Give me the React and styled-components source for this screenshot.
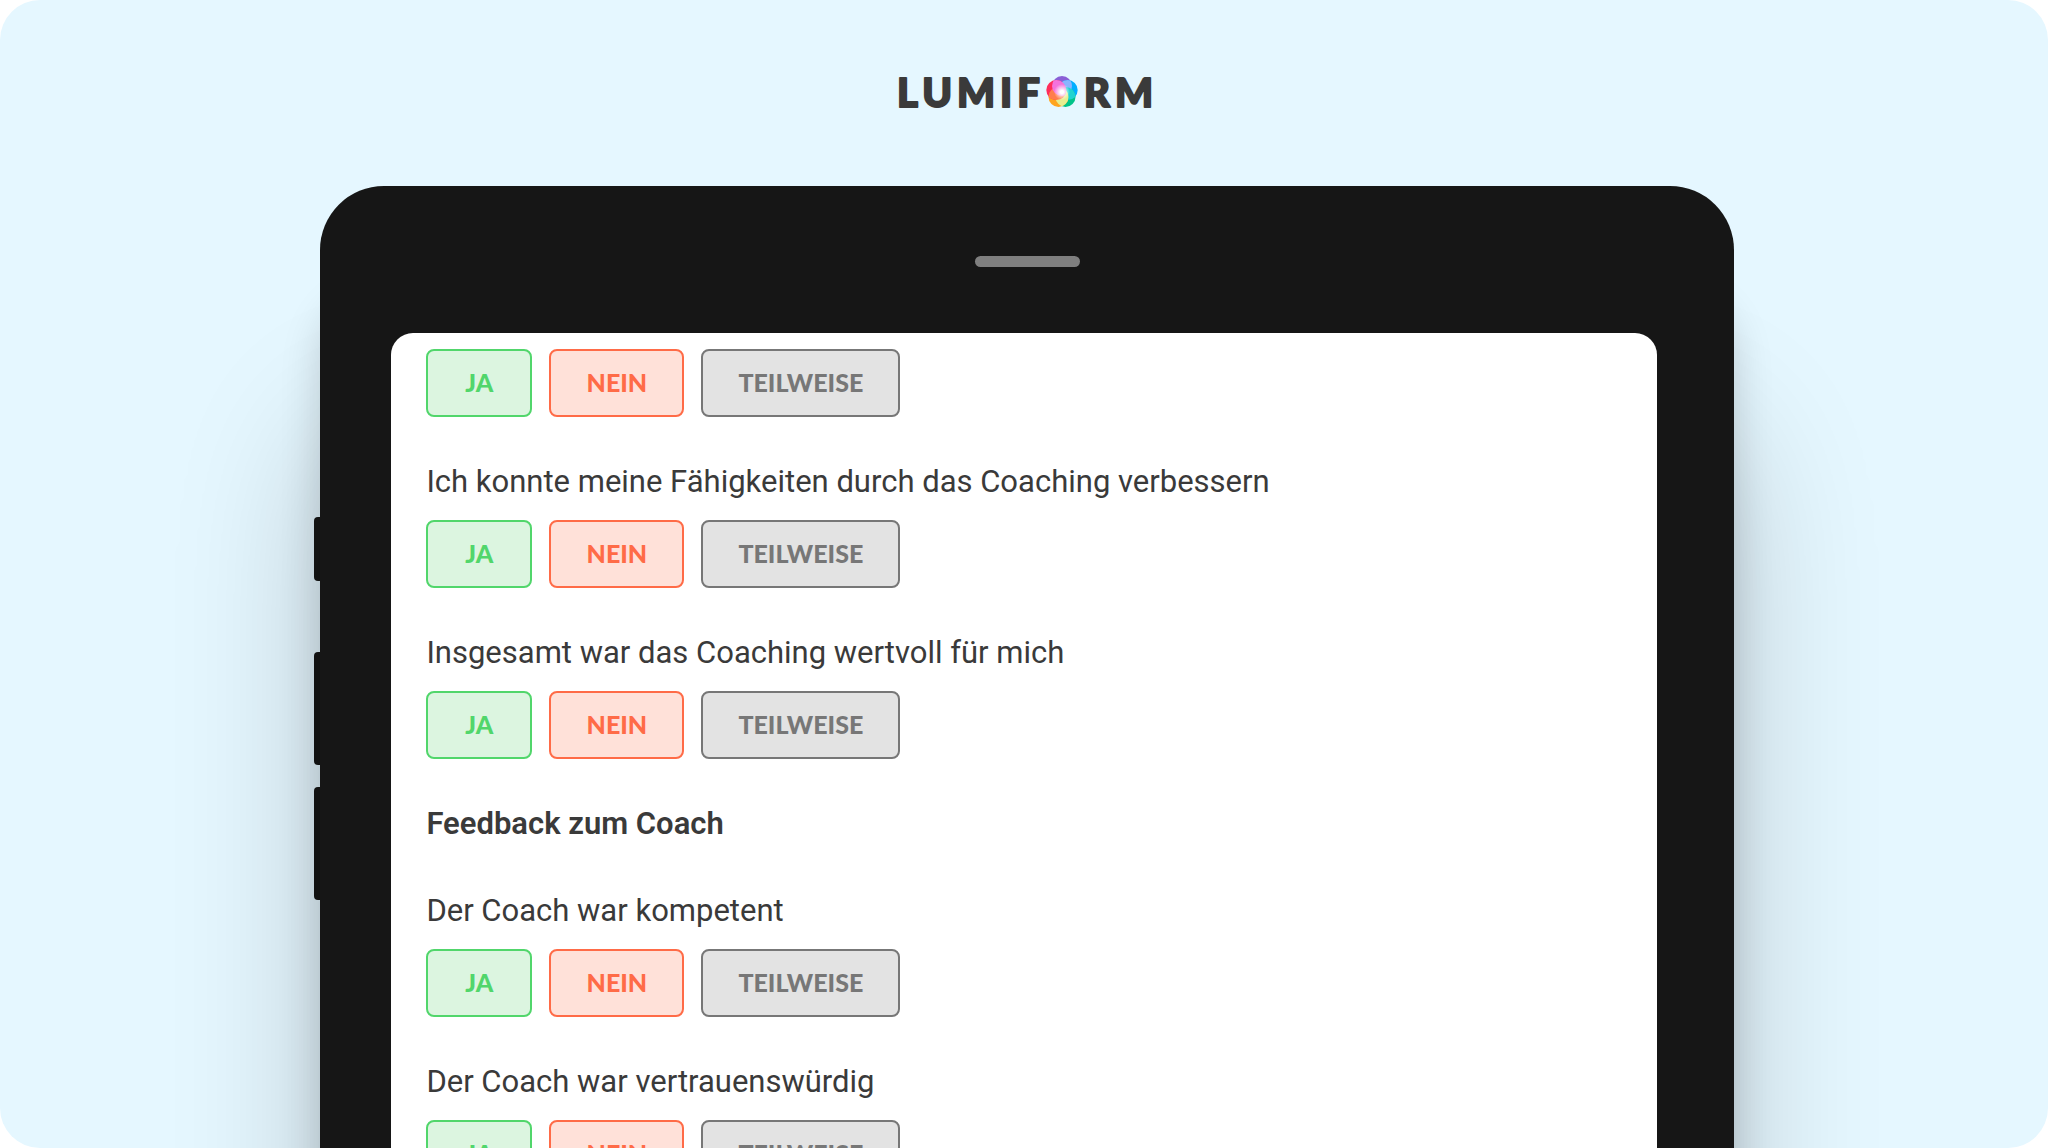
import React from 'react'
import styled, { createGlobalStyle } from 'styled-components'

const tones = {
  green: { color: '#51d66b', background: '#dcf5e0', width: 106 },
  red: { color: '#ff6b47', background: '#ffe1d9', width: 135 },
  grey: { color: '#777777', background: '#e3e3e3', width: 199 }
}

const answers = [
  { label: 'JA', tone: 'green' },
  { label: 'NEIN', tone: 'red' },
  { label: 'TEILWEISE', tone: 'grey' }
]

// each petal lies over the next one, "mix" is the colour of that overlap
const petals = [
  { cx: 173, cy: 24, fill: '#8a5fd6', mix: '#8ab4ff' },
  { cx: 178.7, cy: 28.1, fill: '#00aeff', mix: '#1fd3d0' },
  { cx: 176.5, cy: 34.9, fill: '#00c389', mix: '#e6ee90' },
  { cx: 169.5, cy: 34.9, fill: '#ffa51f', mix: '#ff7d4d' },
  { cx: 167.3, cy: 28.1, fill: '#ff2d5b', mix: '#f472dc' }
]

const Logo = () => (
  <LogoSvg viewBox="0 0 270 60" role="img" aria-label="Lumiform">
    <defs>
      {petals.map(({ cx, cy }, i) => (
        <clipPath key={i} id={`petal-${i}`}>
          <circle cx={cx} cy={cy} r="10" />
        </clipPath>
      ))}
      <radialGradient id="glow">
        <stop offset="0.2" stopColor="#ffffff" />
        <stop offset="1" stopColor="#ffffff" stopOpacity="0" />
      </radialGradient>
    </defs>
    <LogoText x="8" y="45">LUMIF</LogoText>
    {petals.map(({ cx, cy, fill }, i) => (
      <circle key={i} cx={cx} cy={cy} r="10" fill={fill} />
    ))}
    {petals.map(({ cx, cy, mix }, i) => (
      <circle key={i} cx={cx} cy={cy} r="10" fill={mix} clipPath={`url(#petal-${(i + 1) % 5})`} />
    ))}
    <circle cx="173" cy="30" r="8" fill="url(#glow)" />
    <LogoText x="195" y="45">RM</LogoText>
  </LogoSvg>
)

const Question = ({ text }) => (
  <Block>
    {text && <Label>{text}</Label>}
    <Answers role="group" aria-label={text}>
      {answers.map(({ label, tone }) => (
        <Answer key={label} type="button" $tone={tones[tone]}>
          {label}
        </Answer>
      ))}
    </Answers>
  </Block>
)

export default () => {
  return (
    <Stage>
      <GlobalStyle />
      <Header>
        <Logo />
      </Header>
      <Tablet>
        <SideButtons>
          <SideButton $size={64} />
          <SideButton $size={113} $gap={71} />
          <SideButton $size={113} $gap={22} />
        </SideButtons>
        <Body>
          <Speaker />
          <Screen>
            <Question />
            <Question text="Ich konnte meine Fähigkeiten durch das Coaching verbessern" />
            <Question text="Insgesamt war das Coaching wertvoll für mich" />
            <Title>Feedback zum Coach</Title>
            <Question text="Der Coach war kompetent" />
            <Question text="Der Coach war vertrauenswürdig" />
          </Screen>
        </Body>
      </Tablet>
    </Stage>
  )
}

const GlobalStyle = createGlobalStyle`
  * {
    box-sizing: border-box;
  }
  body {
    margin: 0;
    background: #ffffff;
    font-family: Roboto, 'Liberation Sans', sans-serif;
    color: #3a3a3a;
  }
`
const Stage = styled.main`
  display: flex;
  flex-direction: column;
  align-items: center;
  height: 100vh;
  overflow: hidden;
  border-radius: 40px;
  background: #e5f7ff;
`
const Header = styled.header`
  display: flex;
  flex-shrink: 0;
  align-items: flex-start;
  height: 186px;
  padding-top: 62px;
`
const LogoSvg = styled.svg`
  display: block;
  width: 270px;
  height: 60px;
`
const LogoText = styled.text`
  font-family: Lato, sans-serif;
  font-size: 40px;
  font-weight: 900;
  letter-spacing: 5px;
  fill: #3a3a3a;
  stroke: #3a3a3a;
  stroke-width: 2px;
  stroke-linejoin: round;
`
const Tablet = styled.div`
  display: grid;
  flex-shrink: 0;
  grid-template-columns: 6px 1fr;
  width: 69.3%;
`
const SideButtons = styled.div`
  padding-top: 331px;
`
const SideButton = styled.div`
  height: ${({ $size }) => $size}px;
  margin-top: ${({ $gap = 0 }) => $gap}px;
  border-radius: 4px 0 0 4px;
  background: #161616;
`
const Body = styled.div`
  display: flex;
  flex-direction: column;
  align-items: center;
  padding: 70px 77px 78px 71px;
  border-radius: 64px;
  background: #161616;
  box-shadow:
    0 110px 40px rgba(0, 0, 0, 0.16),
    0 240px 150px rgba(0, 0, 0, 0.2);
`
const Speaker = styled.div`
  width: 105px;
  height: 11px;
  margin: 0 0 66px 6px;
  border-radius: 6px;
  background: #7f7f7f;
`
const Screen = styled.section`
  display: flex;
  flex-direction: column;
  align-items: flex-start;
  width: 100%;
  min-height: 1600px;
  padding: 16px 35px;
  border-radius: 22px;
  background: #ffffff;
`
const Block = styled.div`
  margin-bottom: 43px;
`
const Label = styled.p`
  margin: 0 0 16px;
  font-size: 31px;
  line-height: 44px;
`
const Title = styled.h2`
  margin: 0 0 43px;
  font-size: 31px;
  font-weight: 600;
  line-height: 44px;
`
const Answers = styled.div`
  display: flex;
  gap: 17px;
`
const Answer = styled.button`
  width: ${({ $tone }) => $tone.width}px;
  height: 68px;
  padding: 0 0 2px;
  border: 2px solid ${({ $tone }) => $tone.color};
  border-radius: 8px;
  background: ${({ $tone }) => $tone.background};
  color: ${({ $tone }) => $tone.color};
  font-family: Lato, sans-serif;
  font-size: 25px;
  font-weight: 900;
`
